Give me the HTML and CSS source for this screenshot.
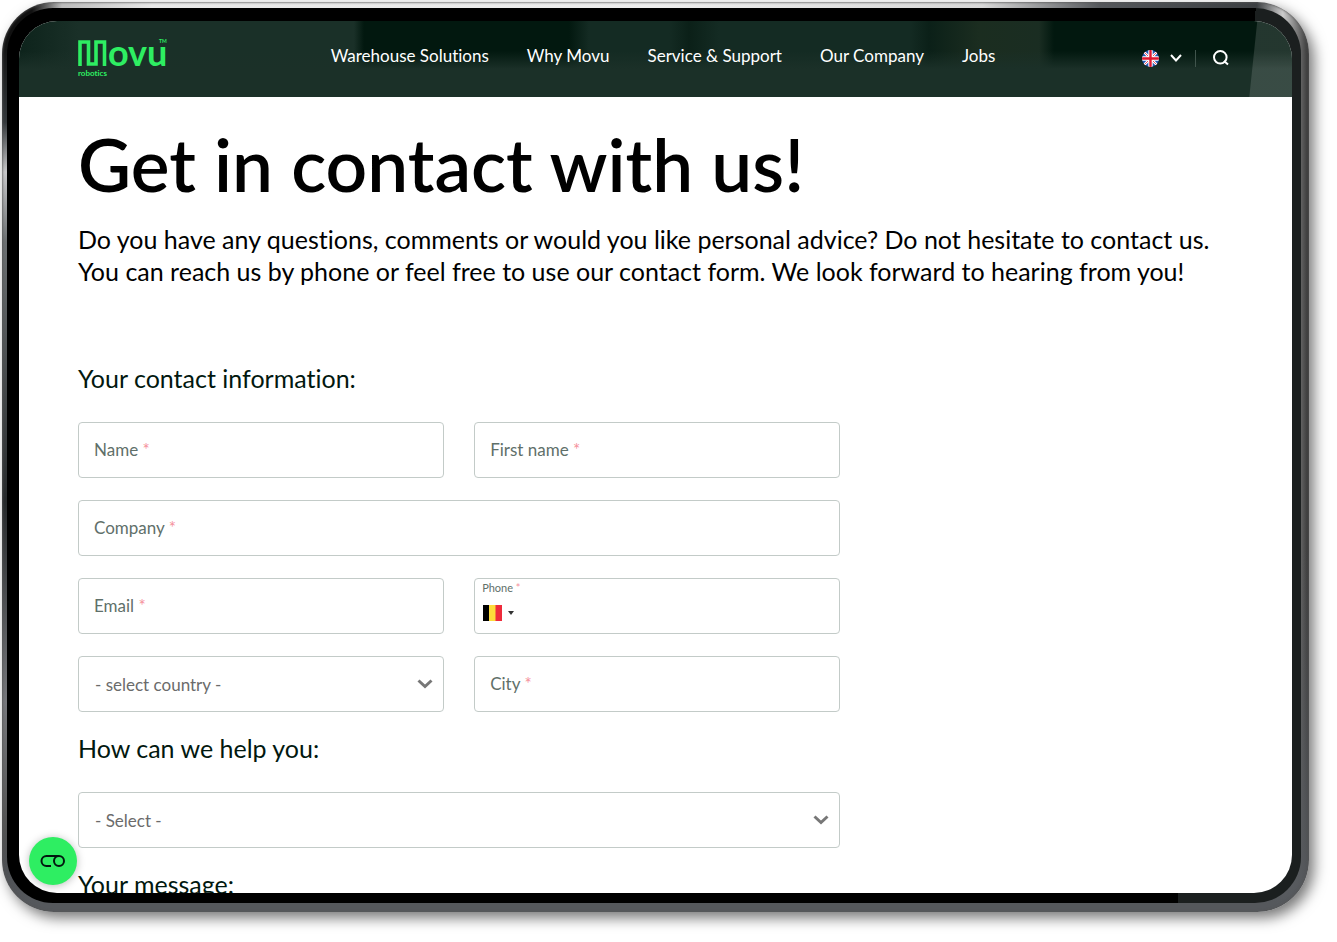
FILE: index.html
```
<!DOCTYPE html>
<html lang="en">
  <head>
    <meta charset="UTF-8" />
    <meta name="viewport" content="width=device-width, initial-scale=1.0" />
    <title>Contact | Movu Robotics</title>
    <link rel="stylesheet" href="styles.css">
  </head>
  <body>
    <div class="device">
      <div class="bezel">
        <div class="screen">
          <header class="header">
            <a href="#" class="logo" aria-label="Movu robotics">
              <svg width="90" height="40" viewBox="0 0 90 40">
                <path d="M2 28V4H10.500V26H18V4H26.500V28" class="logo-mark" />
                <text x="30" y="28" class="logo-name">ovu</text>
                <text x="81" y="5" class="logo-small">TM</text>
                <text x="0" y="38" class="logo-sub">robotics</text>
              </svg>
            </a>
            <nav class="nav">
              <a href="#">Warehouse Solutions</a>
              <a href="#">Why Movu</a>
              <a href="#">Service &amp; Support</a>
              <a href="#">Our Company</a>
              <a href="#">Jobs</a>
            </nav>
            <div class="tools">
              <button type="button" class="language" aria-label="Language">
                <svg width="17" height="17" viewBox="0 0 17 17">
                  <clipPath id="round"><circle cx="8.5" cy="8.5" r="8.5" /></clipPath>
                  <g clip-path="url(#round)">
                    <rect width="17" height="17" fill="#2358b5" />
                    <path d="M0 0L17 17M17 0L0 17" stroke="#fff" stroke-width="2.6" />
                    <path d="M0 0L17 17M17 0L0 17" stroke="#e0253f" stroke-width="0.8" />
                    <path d="M8.5 0V17M0 8.5H17" stroke="#fff" stroke-width="4.4" />
                    <path d="M8.5 0V17M0 8.5H17" stroke="#e0162f" stroke-width="2.4" />
                  </g>
                </svg>
                <svg width="12" height="8" viewBox="0 0 12 8" class="arrow">
                  <path d="M1 1L6 6.5L11 1" />
                </svg>
              </button>
              <button type="button" class="search" aria-label="Search">
                <svg width="16" height="16" viewBox="0 0 16 16">
                  <circle cx="7.3" cy="7.3" r="6.3" />
                  <path d="M11 11L15 14.6" />
                </svg>
              </button>
            </div>
          </header>

          <main class="content">
            <h1>Get in contact with us!</h1>
            <p class="intro">
              Do you have any questions, comments or would you like personal advice? Do not hesitate to contact us.<br />
              You can reach us by phone or feel free to use our contact form. We look forward to hearing from you!
            </p>

            <form class="form">
              <h2>Your contact information:</h2>
              <div class="field">
                <input type="text" id="name" required />
                <label for="name">Name <span>*</span></label>
              </div>
              <div class="field">
                <input type="text" id="firstName" required />
                <label for="firstName">First name <span>*</span></label>
              </div>
              <div class="field wide">
                <input type="text" id="company" required />
                <label for="company">Company <span>*</span></label>
              </div>
              <div class="field">
                <input type="email" id="email" required />
                <label for="email">Email <span>*</span></label>
              </div>
              <div class="field phone">
                <input type="tel" id="phone" required />
                <label for="phone">Phone <span>*</span></label>
                <button type="button" class="prefix" aria-label="Country code">
                  <svg width="19" height="16" viewBox="0 0 19 16">
                    <rect width="7" height="16" fill="#000" />
                    <rect x="6" width="7" height="16" fill="#fddb3a" />
                    <rect x="12.5" width="6.5" height="16" fill="#ee2b3b" />
                  </svg>
                  <svg width="6" height="4" viewBox="0 0 6 4">
                    <path d="M0 0H6L3 4Z" fill="#333" />
                  </svg>
                </button>
              </div>
              <div class="field">
                <select id="country" aria-label="Country">
                  <option>- select country -</option>
                </select>
                <svg width="16" height="10" viewBox="0 0 16 10" class="chevron">
                  <path d="M1.5 1.5L8 7.5L14.5 1.5" />
                </svg>
              </div>
              <div class="field">
                <input type="text" id="city" required />
                <label for="city">City <span>*</span></label>
              </div>

              <h2>How can we help you:</h2>
              <div class="field wide">
                <select id="subject" aria-label="How can we help you">
                  <option>- Select -</option>
                </select>
                <svg width="16" height="10" viewBox="0 0 16 10" class="chevron">
                  <path d="M1.5 1.5L8 7.5L14.5 1.5" />
                </svg>
              </div>

              <h2>Your message:</h2>
            </form>
          </main>

          <button type="button" class="cookie" aria-label="Cookie settings">
            <svg width="26" height="14" viewBox="0 0 26 14">
              <path d="M11 12H6.500A5 5 0 0 1 6.500 2H19" />
              <circle cx="19" cy="7" r="5" />
            </svg>
          </button>
        </div>
      </div>
    </div>
  </body>
</html>
```

FILE: styles.css
```
* {
  box-sizing: border-box;
}

body {
  margin: 0;
  height: 100vh;
  padding: 2px 28px 30px 2px;
  overflow: hidden;
  background-color: #fff;
  font-family: Lato, "Liberation Sans", sans-serif;
  font-variant-ligatures: none;
  color: #000;
}

a {
  color: inherit;
  text-decoration: none;
}

button {
  padding: 0;
  border: none;
  background: none;
  color: inherit;
  cursor: pointer;
}

svg {
  display: block;
  overflow: visible;
  fill: none;
}

/* tablet frame */
.device {
  height: 100%;
  padding: 6px 8px 9px 5px;
  border-radius: 52px;
  background:
    linear-gradient(to bottom, #0000 40px, #33373a 120px, #c8c8ca 170px, #6c7072 240px, #26292b 500px, #77787c 700px, #555 820px, #0000 870px) left / 6px 100% no-repeat,
    linear-gradient(to bottom, #0000 60%, #55585c 99%),
    linear-gradient(to right, #111 30px, #bbb 60px, #e8e8e8 150px, #eee 50%, #d8d8d8 75%, #55585c 84%, #3c3f42 96%, #ccc 98%, #333);
  box-shadow: inset 0 0 2px 1px #555a, 5px 6px 14px #0008;
}

.bezel {
  height: 100%;
  padding: 13px 9px 10px 12px;
  border-radius: 46px;
  background: linear-gradient(95deg, #000 91%, #1b1f1f 91%);
}

.screen {
  position: relative;
  height: 100%;
  overflow: hidden;
  border-radius: 38px;
  background-color: #fff;
}

.header {
  display: flex;
  align-items: center;
  justify-content: space-between;
  height: 76px;
  padding: 0 63px 2px 59px;
  color: #fff;
  background:
    linear-gradient(96deg, #0000 1231px, #fff2 1232px),
    linear-gradient(#0000 30px, #1b3028 48px),
    linear-gradient(to right, #0d231b 0, #1a3028 60px, #1a3028 335px, #02180f 345px, #02180f 550px, #142b23 570px, #142b23 650px, #0b2018 670px, #142b23 700px, #142b23 890px, #0b2018 910px, #1b2d20 960px, #1a2d22 1020px, #02180f 1035px);
}

.logo-mark {
  stroke: #2eee62;
  stroke-width: 3.6;
}

.logo-name,
.logo-small,
.logo-sub {
  fill: #2eee62;
  font-weight: bold;
}

.logo-name {
  font-size: 36px;
}

.logo-small {
  font-size: 5px;
}

.logo-sub {
  font-size: 8px;
}

.nav {
  display: flex;
  gap: 38px;
  padding: 0 4px 4px 20px;
  font-size: 17px;
  line-height: 24px;
  white-space: nowrap;
}

.tools,
.language {
  display: flex;
  align-items: center;
}

.language {
  gap: 11px;
  padding-right: 13px;
  border-right: 1px solid #40544c;
}

.search {
  padding-left: 17px;
}

.arrow,
.search svg {
  stroke: #fff;
  stroke-width: 2;
}

.content {
  padding: 21px 59px 0;
}

h1 {
  margin: 0;
  font-size: 73px;
  line-height: 92px;
  font-weight: 600;
}

.intro {
  margin: 13px 0 77px;
  font-size: 25px;
  line-height: 32px;
  white-space: nowrap;
}

.form {
  display: grid;
  grid-template-columns: 1fr 1fr;
  gap: 22px 30px;
  width: 66%;
}

h2 {
  grid-column: 1 / -1;
  margin: 0;
  padding-bottom: 8px;
  font-size: 25px;
  line-height: 28px;
  font-weight: normal;
  color: #02180f;
}

.wide {
  grid-column: 1 / -1;
}

/* the label and icons share one cell with the control */
.field {
  display: grid;
  align-items: center;
  height: 56px;
  font-size: 17px;
  color: #5f706a;
}

.field > * {
  grid-area: 1 / 1;
}

.field input,
.field select {
  width: 100%;
  height: 100%;
  padding: 0 16px;
  border: 1px solid #c3cbc8;
  border-radius: 4px;
  background-color: #fff;
  color: #6b6b6b;
  font: inherit;
  appearance: none;
}

.field label {
  justify-self: start;
  padding: 0 0 2px 16px;
}

.field label span {
  color: #f5919b;
}

.chevron {
  justify-self: end;
  margin-right: 11px;
  stroke: #777;
  stroke-width: 3;
}

.phone label {
  align-self: start;
  padding: 3px 0 0 8px;
  font-size: 11px;
}

.phone input {
  padding: 14px 16px 0 52px;
}

.prefix {
  display: flex;
  align-items: center;
  justify-self: start;
  gap: 6px;
  padding: 14px 0 0 9px;
}

.cookie {
  position: absolute;
  left: 10px;
  bottom: 8px;
  display: flex;
  align-items: center;
  justify-content: center;
  width: 48px;
  height: 48px;
  border-radius: 50%;
  background-color: #2eee62;
  box-shadow: 0 1px 8px #0004;
}

.cookie svg {
  stroke: #02180f;
  stroke-width: 2;
}
```
